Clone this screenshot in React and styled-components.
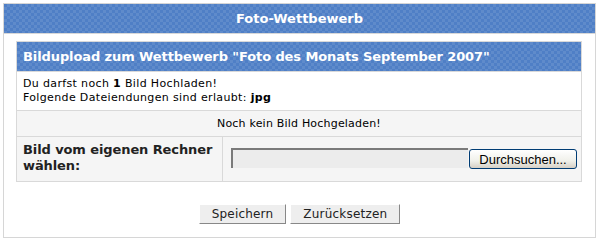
import React from "react";
import styled, { createGlobalStyle } from "styled-components";

const GlobalStyle = createGlobalStyle`
  html, body {
    margin: 0;
    padding: 0;
    background: #ffffff;
  }
  body {
    font-family: "DejaVu Sans", Verdana, sans-serif;
    font-size: 11px;
    color: #000000;
  }
`;

export default function App() {
  return (
    <>
      <GlobalStyle />
      <Page>
        <Header>Foto-Wettbewerb</Header>
        <Content>
          <Box>
            <BoxTitle>
              Bildupload zum Wettbewerb "Foto des Monats September 2007"
            </BoxTitle>
            <InfoRow>
              Du darfst noch <b>1</b> Bild Hochladen!
              <br />
              Folgende Dateiendungen sind erlaubt: <b>jpg</b>
            </InfoRow>
            <NoticeRow>Noch kein Bild Hochgeladen!</NoticeRow>
            <FileRow>
              <Label>Bild vom eigenen Rechner wählen:</Label>
              <FileCell>
                <FileField />
                <BrowseButton>Durchsuchen...</BrowseButton>
              </FileCell>
            </FileRow>
          </Box>
          <Actions>
            <ActionButton>Speichern</ActionButton>
            <ActionButton>Zurücksetzen</ActionButton>
          </Actions>
        </Content>
      </Page>
    </>
  );
}

const blueBar = `
  background-color: #4f7fc6;
  background-image:
    linear-gradient(45deg, rgba(255,255,255,0.09) 25%, transparent 25%, transparent 75%, rgba(255,255,255,0.09) 75%),
    linear-gradient(45deg, rgba(255,255,255,0.09) 25%, transparent 25%, transparent 75%, rgba(255,255,255,0.09) 75%);
  background-size: 6px 6px;
  background-position: 0 0, 3px 3px;
  color: #ffffff;
  font-weight: bold;
  font-size: 13px;
`;

const Page = styled.div`
  margin: 3px 3px 0 3px;
  width: 591px;
  height: 233px;
  border: 1px solid #d6d6d6;
`;

const Header = styled.div`
  ${blueBar}
  height: 29px;
  line-height: 29px;
  text-align: center;
  border-bottom: 1px solid #d8d8d8;
`;

const Content = styled.div`
  padding: 7px 12px 0 12px;
`;

const Box = styled.div`
  border: 1px solid #d9d9d9;
  width: 564px;
`;

const BoxTitle = styled.div`
  ${blueBar}
  height: 29px;
  line-height: 29px;
  padding-left: 6px;
  letter-spacing: -0.1px;
  border-bottom: 1px solid #d9d9d9;
`;

const InfoRow = styled.div`
  height: 33px;
  padding: 5px 6px 0 6px;
  line-height: 14px;
  letter-spacing: 0.35px;
  border-bottom: 1px solid #d9d9d9;
  background: #ffffff;
`;

const NoticeRow = styled.div`
  height: 25px;
  line-height: 25px;
  text-align: center;
  letter-spacing: 0.2px;
  background: #f5f5f5;
  border-bottom: 1px solid #d9d9d9;
`;

const FileRow = styled.div`
  display: flex;
  height: 44px;
  background: #f5f5f5;
`;

const Label = styled.div`
  width: 199px;
  padding: 5px 0 0 6px;
  font-weight: bold;
  font-size: 13px;
  line-height: 16px;
  letter-spacing: -0.1px;
  color: #222222;
  border-right: 1px solid #d9d9d9;
`;

const FileCell = styled.div`
  display: flex;
  align-items: flex-start;
  padding: 11px 0 0 8px;
`;

const FileField = styled.div`
  width: 235px;
  height: 18px;
  background: #ececec;
  border-top: 2px solid #7a7a7a;
  border-left: 2px solid #7a7a7a;
`;

const BrowseButton = styled.button`
  margin: 1px 0 0 1px;
  width: 108px;
  height: 20px;
  padding: 0;
  border: 1px solid #003c74;
  border-radius: 3px;
  background: linear-gradient(#ffffff, #f0f0ea 60%, #d6d0c5);
  font-family: "Liberation Sans", Arial, sans-serif;
  font-size: 13px;
  color: #000000;
`;

const Actions = styled.div`
  display: flex;
  justify-content: center;
  gap: 4px;
  margin-top: 22px;
`;

const ActionButton = styled.button`
  height: 20px;
  padding: 0 12px;
  background: #eeeeee;
  border: 1px solid #ffffff;
  border-right-color: #888888;
  border-bottom-color: #888888;
  font-family: "DejaVu Sans", Verdana, sans-serif;
  font-size: 12px;
  letter-spacing: 0.2px;
  color: #222222;
`;
